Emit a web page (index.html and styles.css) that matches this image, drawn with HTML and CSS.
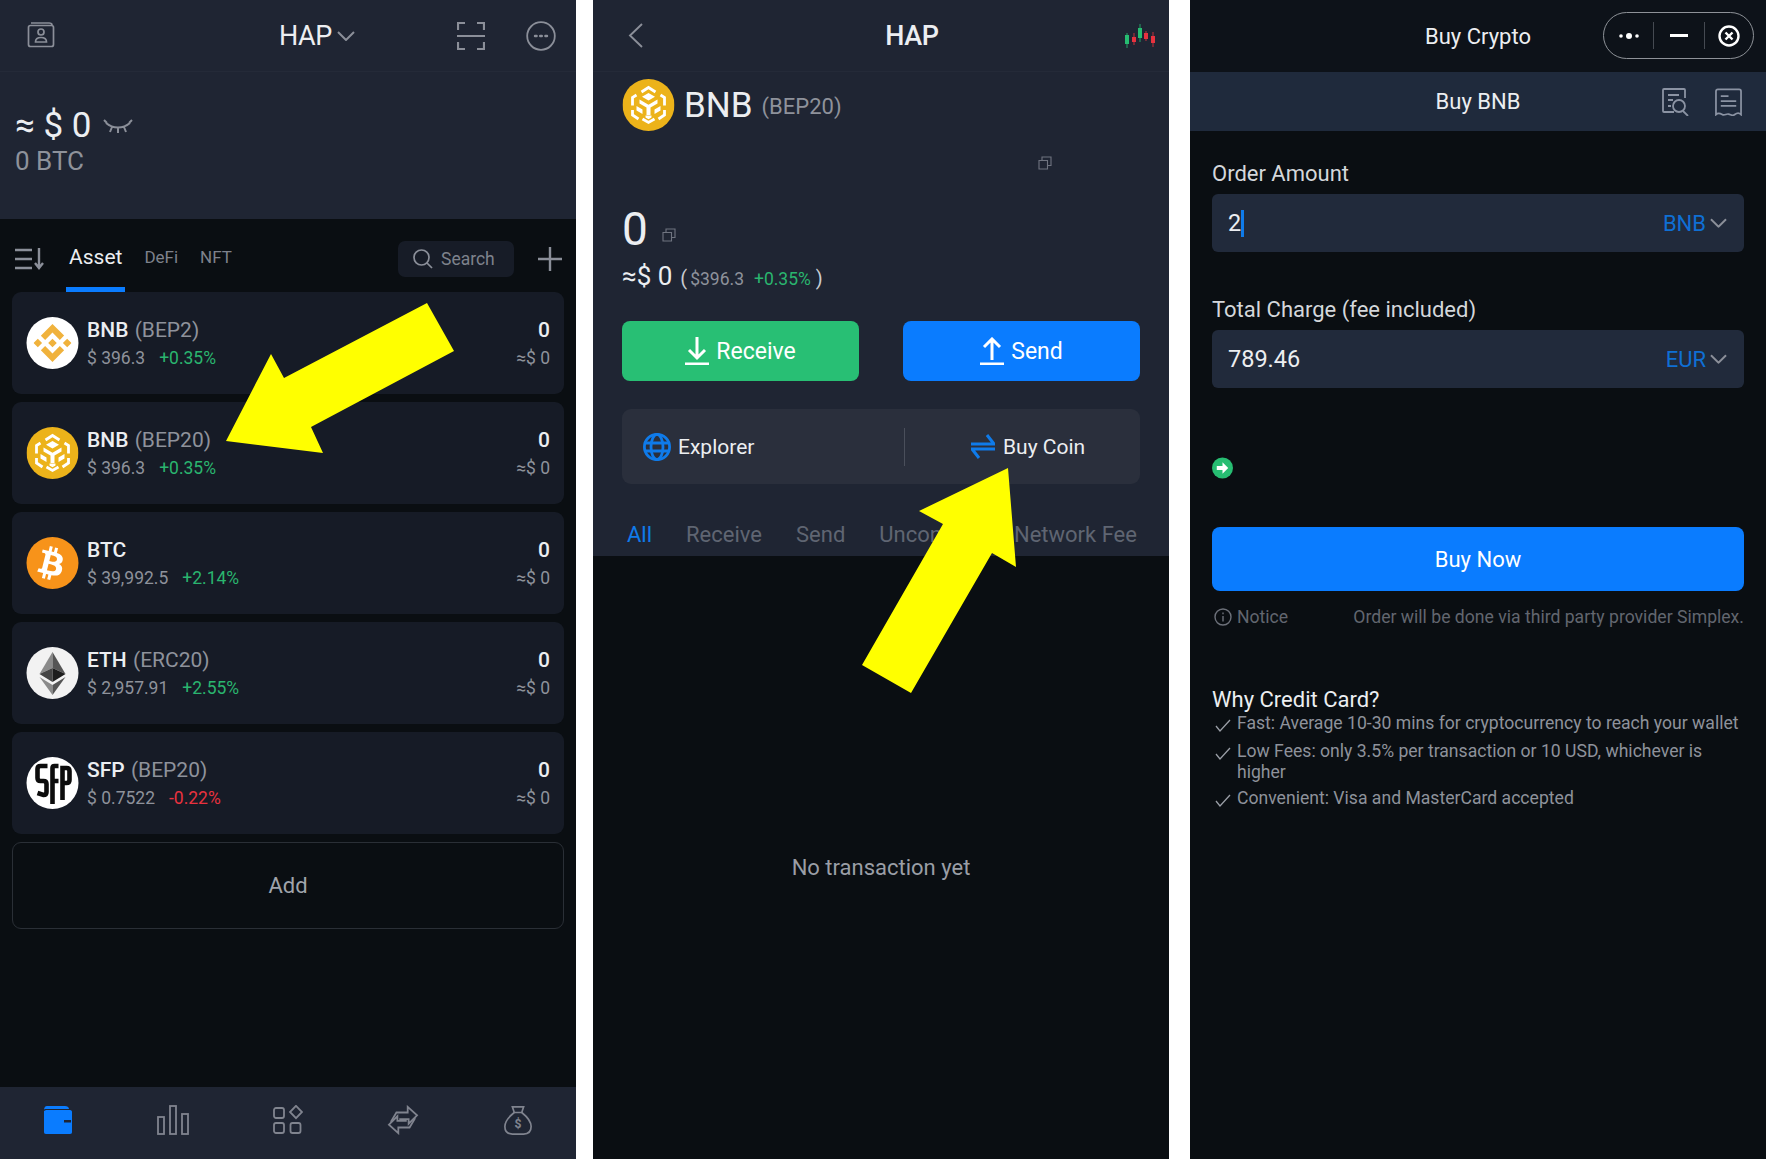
FILE: index.html
```html
<!DOCTYPE html>
<html lang="en">
<head>
<meta charset="utf-8">
<title>HAP wallet - Buy BNB</title>
<link rel="stylesheet" href="styles.css">
</head>
<body>
<svg class="defs" aria-hidden="true">
  <defs>
    <symbol id="binance" viewBox="0 0 24 24">
      <path d="M16.624 13.9202l2.7175 2.7154-7.353 7.353-7.353-7.352 2.7175-2.7164 4.6355 4.6595 4.6356-4.6595zm4.6366-4.6366L24 12l-2.7154 2.7164L18.5682 12l2.6924-2.7164zm-9.272.001l2.7163 2.6914-2.7164 2.7174v-.001L9.2721 12l2.7164-2.7154zm-9.2722-.001L5.4088 12l-2.6914 2.6924L0 12l2.7164-2.7164zM11.9885.0115l7.353 7.329-2.7174 2.7154-4.6356-4.6356-4.6355 4.6595-2.7174-2.7154 7.353-7.353z"/>
    </symbol>
    <symbol id="bnbchain" viewBox="0 0 52 52">
      <circle cx="26" cy="26" r="26" fill="#ecb31a"/>
      <g fill="none" stroke="#fff" stroke-width="2.800">
        <path d="M19 13l7-4.500 7 4.500"/>
        <path d="M14 16l-4 2.500v8"/>
        <path d="M38 16l4 2.500v8"/>
        <path d="M10 31v5l6 4"/>
        <path d="M42 31v5l-6 4"/>
        <path d="M20 40l6 3.500 6-3.500"/>
      </g>
      <path fill="#fff" d="M26 14l6.500 3.700-6.500 3.800-6.500-3.800zM17 20.500l9 5.200 9-5.200v4l-7 4V36h-4v-7.500l-7-4zM14 27l6 3.500v4.500l-6-3.500zM38 27l-6 3.500v4.500l6-3.500zM23 38.500l3 1.800 3-1.800v-2h-6z"/>
    </symbol>
    <symbol id="copy" viewBox="0 0 14 14">
      <path fill="none" stroke="#6f7480" stroke-width="1.100" d="M1 4.500h8.500v8.500H1zM4 4.500V1h9v8.500H9.500"/>
    </symbol>
    <symbol id="chev" viewBox="0 0 18 10">
      <path fill="none" stroke="currentColor" stroke-width="2" d="M1 1l8 8 8-8"/>
    </symbol>
  </defs>
</svg>
<main class="page">

  <section class="panel">
    <header class="head head-wallet">
      <svg class="ic-28" viewBox="0 0 28 28" fill="none" stroke="#8b8f99" stroke-width="1.700">
        <path d="M4 3h18c2 0 3 1 3 2M1.500 7.500c0-1 1-2 2-2h21c1 0 2 1 2 2v17c0 1-1 2-2 2h-21c-1 0-2-1-2-2z"/>
        <circle cx="14" cy="12" r="3"/><path d="M8.500 22c0-3 2-4.500 5.500-4.500s5.500 1.500 5.500 4.500z"/>
      </svg>
      <div class="wallet-name"><span>HAP</span><svg class="chev-lg" viewBox="0 0 18 10"><use href="#chev"/></svg></div>
      <svg class="ic-scan" viewBox="0 0 28 28" fill="none" stroke="#8b8f99" stroke-width="2.200">
        <path d="M1 8V1h7M20 1h7v7M1 20v7h7M20 27h7v-7M0 14h28"/>
      </svg>
      <svg class="ic-more" viewBox="0 0 30 30" fill="none" stroke="#8b8f99" stroke-width="1.800">
        <circle cx="15" cy="15" r="13.800"/>
        <path d="M9 15h1.600M14.200 15h1.600M19.400 15H21" stroke-width="2.400" stroke-linecap="round"/>
      </svg>
    </header>
    <div class="balance">
      <div class="balance-main"><span>≈ $ 0</span>
        <svg class="ic-eye" viewBox="0 0 30 16" fill="none" stroke="#8b8f99" stroke-width="2">
          <path d="M1 2l3 3M29 2l-3 3M3 5c7 6 17 6 24 0M9 9L7 14M21 9l2 5M15 10v5"/>
        </svg>
      </div>
      <div class="balance-btc">0 BTC</div>
    </div>
    <div class="tabs">
      <svg class="ic-sort" viewBox="0 0 29 22" fill="none" stroke="#8b8f99" stroke-width="2.400">
        <path d="M0 2h17M0 11h17M0 20h17M24 0v20M20 15l4 5 4-5" />
      </svg>
      <div class="tab tab-on">Asset</div>
      <div class="tab">DeFi</div>
      <div class="tab">NFT</div>
      <div class="search">
        <svg class="ic-search" viewBox="0 0 20 20" fill="none" stroke="#8b8f99" stroke-width="1.700">
          <circle cx="8.500" cy="8.500" r="7.500"/><path d="M14 14l5 5"/>
        </svg>
        <span>Search</span>
      </div>
      <svg class="ic-plus" viewBox="0 0 24 24" stroke="#8b8f99" stroke-width="2.400"><path d="M12 0v24M0 12h24"/></svg>
    </div>
    <div class="list">
      <article class="coin">
        <svg class="coin-logo" viewBox="0 0 52 52">
          <circle cx="26" cy="26" r="26" fill="#fff"/>
          <svg x="7" y="7" width="38" height="38" viewBox="0 0 24 24" fill="#f0b23c"><use href="#binance"/></svg>
        </svg>
        <div class="coin-info">
          <div class="coin-name"><b>BNB</b> (BEP2)</div>
          <div class="coin-price"><span class="price">$ 396.3</span><span class="up">+0.35%</span></div>
        </div>
        <div class="coin-bal"><b>0</b><span>≈$ 0</span></div>
      </article>
      <article class="coin">
        <svg class="coin-logo" viewBox="0 0 52 52"><use href="#bnbchain"/></svg>
        <div class="coin-info">
          <div class="coin-name"><b>BNB</b> (BEP20)</div>
          <div class="coin-price"><span class="price">$ 396.3</span><span class="up">+0.35%</span></div>
        </div>
        <div class="coin-bal"><b>0</b><span>≈$ 0</span></div>
      </article>
      <article class="coin">
        <svg class="coin-logo" viewBox="0 0 52 52">
          <circle cx="26" cy="26" r="26" fill="#f7931a"/>
          <g transform="translate(26 26) scale(2.050) translate(-12 -12)">
            <path fill="#fff" d="M17.004 10.407c.264-1.74-1.06-2.675-2.87-3.3l.587-2.356-1.434-.357-.572 2.294c-.377-.094-.764-.182-1.15-.27l.576-2.31-1.433-.357-.588 2.355c-.312-.071-.618-.141-.915-.215l.002-.007-1.978-.494-.382 1.532s1.064.244 1.042.259c.581.145.686.53.668.835l-.669 2.685c.04.01.092.025.149.048l-.151-.038-.938 3.762c-.071.176-.251.441-.657.34.014.021-1.042-.26-1.042-.26l-.712 1.642 1.867.466c.347.087.688.178 1.023.264l-.594 2.384 1.433.357.588-2.358c.391.106.771.204 1.143.296l-.586 2.347 1.435.357.594-2.38c2.448.463 4.288.276 5.063-1.937.624-1.783-.031-2.811-1.318-3.482.937-.216 1.643-.832 1.832-2.105zm-3.28 4.599c-.444 1.783-3.447.819-4.421.577l.789-3.162c.974.243 4.096.724 3.632 2.585zm.444-4.625c-.405 1.622-2.905.798-3.716.596l.715-2.867c.811.202 3.423.58 3.001 2.271z"/>
          </g>
        </svg>
        <div class="coin-info">
          <div class="coin-name"><b>BTC</b></div>
          <div class="coin-price"><span class="price">$ 39,992.5</span><span class="up">+2.14%</span></div>
        </div>
        <div class="coin-bal"><b>0</b><span>≈$ 0</span></div>
      </article>
      <article class="coin">
        <svg class="coin-logo" viewBox="0 0 52 52">
          <circle cx="26" cy="26" r="26" fill="#f2f2f2"/>
          <path fill="#8a8a8a" d="M26 5L13 27l13-6z"/>
          <path fill="#555" d="M26 5l13 22-13-6z"/>
          <path fill="#444" d="M13 27l13-6v14z"/>
          <path fill="#1c1c1c" d="M39 27l-13-6v14z"/>
          <path fill="#8a8a8a" d="M13 30l13 8v10z"/>
          <path fill="#555" d="M39 30l-13 8v10z"/>
        </svg>
        <div class="coin-info">
          <div class="coin-name"><b>ETH</b> (ERC20)</div>
          <div class="coin-price"><span class="price">$ 2,957.91</span><span class="up">+2.55%</span></div>
        </div>
        <div class="coin-bal"><b>0</b><span>≈$ 0</span></div>
      </article>
      <article class="coin">
        <svg class="coin-logo" viewBox="0 0 52 52">
          <circle cx="26" cy="26" r="26" fill="#fff"/>
          <g fill="none" stroke="#0c0c0c" stroke-width="4.600">
            <path d="M21 9H14q-3 0-3 3v9q0 3 3 3h3q3 0 3 3v8q0 3-3 3l-6-2"/>
            <path d="M26 47V11q0-2 2-2h4M26 24h6"/>
            <path d="M36 43V11h4q3 0 3 3v9q0 3-3 3h-4"/>
          </g>
        </svg>
        <div class="coin-info">
          <div class="coin-name"><b>SFP</b> (BEP20)</div>
          <div class="coin-price"><span class="price">$ 0.7522</span><span class="down">-0.22%</span></div>
        </div>
        <div class="coin-bal"><b>0</b><span>≈$ 0</span></div>
      </article>
      <div class="add">Add</div>
    </div>
    <nav class="foot">
      <div class="foot-item">
        <svg class="ic-foot" viewBox="0 0 30 30">
          <path fill="#0a7cff" d="M4 1h18c2 0 4 1 4 3H3c-1.500 0-2 .500-2 1 0-2 1-4 3-4z"/>
          <path fill="#0a7cff" d="M3 5h24c1.500 0 2 1 2 2v20c0 1-.500 2-2 2H3c-1.500 0-2-1-2-2V6z"/>
          <rect x="21" y="15" width="7" height="2.500" fill="#1f2533"/>
        </svg>
      </div>
      <div class="foot-item">
        <svg class="ic-foot ic-foot-w" viewBox="0 0 32 30" fill="none" stroke="#80848f" stroke-width="1.800">
          <rect x="1" y="12" width="6" height="17"/><rect x="13" y="1" width="6" height="28"/><rect x="25" y="9" width="6" height="20"/>
        </svg>
      </div>
      <div class="foot-item">
        <svg class="ic-foot" viewBox="0 0 30 30" fill="none" stroke="#80848f" stroke-width="1.800">
          <rect x="1" y="3" width="10" height="10" rx="2"/><path d="M23 0.800l6 6.200-6 6.200-6-6.200z"/>
          <rect x="1" y="18" width="10" height="10" rx="2"/><rect x="17.500" y="18" width="10" height="10" rx="2"/>
        </svg>
      </div>
      <div class="foot-item">
        <svg class="ic-foot ic-foot-w" viewBox="0 0 32 32" fill="none" stroke="#80848f" stroke-width="1.900">
          <path d="M3 18L9 8h12V2l10 9-9 9v-5H12"/>
          <path d="M29 14l-6 10H11v6L1 21l9-9v5h10"/>
        </svg>
      </div>
      <div class="foot-item">
        <svg class="ic-foot" viewBox="0 0 30 32" fill="none" stroke="#80848f" stroke-width="1.800">
          <path d="M9 2h12l-2 6h-8z"/><path d="M11 8C6 12 1 17 1 23c0 5 3 8 8 8h12c5 0 8-3 8-8 0-6-5-11-10-15"/>
          <text class="bag-s" x="15" y="25" text-anchor="middle">$</text>
        </svg>
      </div>
    </nav>
  </section>

  <section class="panel panel-mid">
    <header class="head head-detail">
      <svg class="ic-back" viewBox="0 0 15 25" fill="none" stroke="#8b8f99" stroke-width="1.900"><path d="M14 1L2 12.500 14 24"/></svg>
      <div class="detail-title">HAP</div>
      <svg class="ic-candle" viewBox="0 0 31 24">
        <g fill="#27bd72"><rect x="1" y="11" width="4" height="9"/><rect x="2.600" y="9" width=".8" height="15"/><rect x="14" y="4" width="4" height="10"/><rect x="15.600" y="0" width=".8" height="18"/></g>
        <g fill="#e8323f"><rect x="8" y="13" width="4" height="5"/><rect x="9.600" y="9" width=".8" height="12"/><rect x="20" y="9" width="4" height="6"/><rect x="21.600" y="7" width=".8" height="10"/><rect x="27" y="12" width="4" height="7"/><rect x="28.600" y="8" width=".8" height="15"/></g>
      </svg>
    </header>
    <div class="detail">
      <div class="detail-coin">
        <svg class="coin-logo" viewBox="0 0 52 52"><use href="#bnbchain"/></svg>
        <span class="detail-sym">BNB</span><span class="detail-net">(BEP20)</span>
      </div>
      <div class="addr-row"><svg class="ic-copy" viewBox="0 0 14 14"><use href="#copy"/></svg></div>
      <div class="amount-row"><span class="amount">0</span><svg class="ic-copy" viewBox="0 0 14 14"><use href="#copy"/></svg></div>
      <div class="fiat-row"><span class="fiat">≈$ 0</span><span class="paren">(</span><span class="fiat-price">$396.3</span><span class="up fiat-up">+0.35%</span><span class="paren">)</span></div>
      <div class="actions">
        <div class="btn btn-green">
          <svg class="ic-btn" viewBox="0 0 24 28" fill="none" stroke="#fff" stroke-width="3"><path d="M12 0v21M4 13l8 8 8-8M0 27h24"/></svg>Receive
        </div>
        <div class="btn btn-blue">
          <svg class="ic-btn" viewBox="0 0 24 28" fill="none" stroke="#fff" stroke-width="3"><path d="M12 23V3M4 10l8-8 8 8M0 27h24"/></svg>Send
        </div>
      </div>
      <div class="linkbar">
        <div class="link link-l">
          <svg class="ic-globe" viewBox="0 0 28 28" fill="none" stroke="#0f7bea" stroke-width="2.800">
            <circle cx="14" cy="14" r="12.600"/><ellipse cx="14" cy="14" rx="6" ry="12.600"/><path d="M2 10h24M2 18h24"/>
          </svg>
          <span>Explorer</span>
        </div>
        <div class="link link-r">
          <svg class="ic-swap" viewBox="0 0 24 25" fill="none" stroke="#0f7bea" stroke-width="3">
            <path d="M0 10h23L16 1M24 15H1l7 9"/>
          </svg>
          <span>Buy Coin</span>
        </div>
      </div>
      <div class="filters">
        <span class="filter filter-on">All</span><span class="filter">Receive</span><span class="filter">Send</span><span class="filter filter-long">Unconfirmed</span><span class="filter">Network Fee</span>
      </div>
    </div>
    <div class="empty">No transaction yet</div>
  </section>

  <section class="panel panel-buy">
    <header class="head head-buy">
      <span>Buy Crypto</span>
      <div class="capsule">
        <svg class="cap-dots" viewBox="0 0 20 8" fill="#fff"><circle cx="2" cy="4" r="1.800"/><circle cx="10" cy="4" r="3"/><circle cx="18" cy="4" r="1.800"/></svg>
        <i class="cap-sep"></i>
        <svg class="cap-dash" viewBox="0 0 18 3"><rect width="18" height="3" fill="#fff"/></svg>
        <i class="cap-sep"></i>
        <svg class="cap-close" viewBox="0 0 22 22" fill="none" stroke="#fff" stroke-width="2.400"><circle cx="11" cy="11" r="9.500"/><path d="M7.500 7.500l7 7M14.500 7.500l-7 7"/></svg>
      </div>
    </header>
    <div class="subhead">
      <span>Buy BNB</span>
      <div class="subhead-icons">
        <svg class="ic-sub" viewBox="0 0 27 28" fill="none" stroke="#8b93a3" stroke-width="1.800">
          <path d="M12 24H2q-1 0-1-1V2q0-1 1-1h20q1 0 1 1v8M6 7h11M6 12h5M6 18h3"/>
          <circle cx="17" cy="18" r="6"/><path d="M21 23l5 5"/>
        </svg>
        <svg class="ic-sub" viewBox="0 0 28 28" fill="none" stroke="#8b93a3" stroke-width="1.800">
          <path d="M1 27V3q0-2 2-2h22q2 0 2 2v24c-2-2-4-2-6.500 0s-4 0-6.500-.500-4 2-6.500.500S3 25 1 27zM6 8h8M6 13h16M6 18h16"/>
        </svg>
      </div>
    </div>
    <div class="form">
      <label class="field-label">Order Amount</label>
      <div class="field"><span class="field-val">2<i class="caret"></i></span><span class="field-unit">BNB<svg class="chev-sm" viewBox="0 0 18 10"><use href="#chev"/></svg></span></div>
      <label class="field-label field-label-2">Total Charge (fee included)</label>
      <div class="field"><span class="field-val">789.46</span><span class="field-unit">EUR<svg class="chev-sm" viewBox="0 0 18 10"><use href="#chev"/></svg></span></div>
      <svg class="ic-go" viewBox="0 0 22 22"><circle cx="11" cy="11" r="11" fill="#27bd72"/><path fill="#fff" d="M5 9h6V5l6 6-6 6v-4H5z"/></svg>
      <div class="buy-now">Buy Now</div>
      <div class="notice">
        <span class="notice-l"><svg class="ic-info" viewBox="0 0 18 18" fill="none" stroke="#6d717a" stroke-width="1.400"><circle cx="9" cy="9" r="8"/><path d="M9 8v5.500M9 4.500v1.800"/></svg>Notice</span>
        <span>Order will be done via third party provider Simplex.</span>
      </div>
      <h2 class="why">Why Credit Card?</h2>
      <ul class="why-list">
        <li><svg class="ic-check" viewBox="0 0 16 13" fill="none" stroke="#9a9ea6" stroke-width="1.300"><path d="M1 7l4 5L15 1"/></svg><span>Fast: Average 10-30 mins for cryptocurrency to reach your wallet</span></li>
        <li><svg class="ic-check" viewBox="0 0 16 13" fill="none" stroke="#9a9ea6" stroke-width="1.300"><path d="M1 7l4 5L15 1"/></svg><span>Low Fees: only 3.5% per transaction or 10 USD, whichever is higher</span></li>
        <li><svg class="ic-check" viewBox="0 0 16 13" fill="none" stroke="#9a9ea6" stroke-width="1.300"><path d="M1 7l4 5L15 1"/></svg><span>Convenient: Visa and MasterCard accepted</span></li>
      </ul>
    </div>
  </section>

  <svg class="arrows" viewBox="0 0 1766 1159" aria-hidden="true">
    <polygon fill="#ffff00" points="427,303 454,351 311,427 323,453 226,441 271,354 284,378"/>
    <polygon fill="#ffff00" points="1008,468 1016,567 992,553 911,693 862,665 943,524 919,511"/>
  </svg>
</main>
</body>
</html>
```

FILE: styles.css
```css
* { box-sizing: border-box; }
html, body { margin: 0; padding: 0; background: #fff; }
body { font-family: Roboto, "Liberation Sans", sans-serif; color: #eceef1; }
svg { display: block; flex: none; }
.defs { position: absolute; width: 0; height: 0; }

.page { position: relative; display: flex; width: 1766px; height: 1159px; overflow: hidden; background: #fff; }
.panel { width: 576px; height: 1159px; background: #0a0e12; display: flex; flex-direction: column; }
.panel-mid { margin-left: 17px; }
.panel-buy { margin-left: 21px; }
.arrows { position: absolute; left: 0; top: 0; width: 1766px; height: 1159px; pointer-events: none; }

/* Headers */
.head { height: 72px; display: flex; align-items: center; background: #1f2533; border-bottom: 1px solid #242a38; flex: none; }
.head-wallet { padding: 0 21px 0 27px; }
.ic-28 { width: 28px; height: 28px; margin-top: -3px; }
.wallet-name { display: flex; align-items: center; margin-left: 224px; font-size: 27px; line-height: 32px; letter-spacing: -0.4px; }
.chev-lg { width: 18px; height: 10px; margin-left: 5px; color: #8b8f99; }
.ic-scan { width: 28px; height: 28px; margin-left: 102px; }
.ic-more { width: 30px; height: 30px; margin-left: 41px; }

.balance { height: 147px; background: #1f2533; padding: 34px 15px 0; }
.balance-main { display: flex; align-items: center; font-size: 35px; line-height: 40px; }
.ic-eye { width: 30px; height: 16px; margin-left: 12px; margin-top: 0; }
.balance-btc { font-size: 26px; line-height: 30px; color: #8e929b; margin-top: 0; }

/* Tabs */
.tabs { height: 73px; display: flex; align-items: flex-start; padding: 22px 14px 0 15px; flex: none; }
.ic-sort { width: 29px; height: 22px; margin-top: 7px; margin-right: 22px; }
.tab { font-size: 17px; line-height: 32px; color: #7e828c; margin-left: 22px; }
.tab-on { position: relative; font-size: 21px; color: #eceef1; margin-left: 3px; }
.tab-on::after { content: ""; position: absolute; left: -3px; right: -3px; top: 46px; height: 5px; background: #0a7cff; }
.search { display: flex; align-items: center; gap: 8px; width: 116px; height: 36px; margin-left: auto; padding-left: 15px; background: #171c27; border-radius: 7px; color: #7e828c; font-size: 17.500px; }
.ic-search { width: 20px; height: 20px; }
.ic-plus { width: 24px; height: 24px; margin-left: 24px; margin-top: 6px; }

/* List */
.list { display: flex; flex-direction: column; gap: 8px; padding: 0 12px; flex: none; }
.coin { height: 102px; display: flex; align-items: flex-start; padding: 25px 14px 0; background: #161b26; border-radius: 9px; }
.coin-logo { width: 53px; height: 52px; }
.coin-info { margin-left: 8px; flex: 1; }
.coin-name { font-size: 21px; line-height: 26px; color: #8e929b; word-spacing: 1px; }
.coin-name b { font-weight: 500; color: #eceef1; }
.coin-price { display: flex; gap: 14px; font-size: 17.500px; line-height: 22px; margin-top: 4px; color: #8e929b; }
.up { color: #2ab56f; }
.down { color: #e8323f; }
.coin-bal { display: flex; flex-direction: column; align-items: flex-end; }
.coin-bal b { font-size: 21px; line-height: 26px; font-weight: 500; }
.coin-bal span { font-size: 17.500px; line-height: 22px; margin-top: 4px; color: #8e929b; }
.add { height: 87px; display: flex; align-items: center; justify-content: center; border: 1px solid #2a2f36; border-radius: 9px; font-size: 22px; color: #a0a4ab; }

/* Footer */
.foot { margin-top: auto; height: 72px; display: flex; align-items: center; background: #1f2533; flex: none; padding-bottom: 6px; }
.foot-item { flex: 1; display: flex; justify-content: center; }
.ic-foot { width: 30px; height: 30px; }
.ic-foot-w { width: 32px; }
.bag-s { font-family: Roboto, sans-serif; font-size: 13px; font-weight: 700; fill: #80848f; stroke: none; }

/* Detail */
.head-detail { justify-content: space-between; padding: 0 14px 0 35px; }
.ic-back { width: 15px; height: 25px; }
.detail-title { font-size: 27px; font-weight: 500; line-height: 32px; margin-left: 57px; letter-spacing: -0.300px; }
.ic-candle { width: 31px; height: 24px; }
.detail { background: #1f2533; height: 484px; padding: 7px 29px 0 29px; flex: none; }
.detail-coin { display: flex; align-items: center; }
.detail-sym { font-size: 35px; line-height: 40px; margin-left: 9px; margin-top: 2px; }
.detail-net { font-size: 22px; color: #8e929b; margin-left: 9px; margin-top: 2px; }
.addr-row { padding-left: 416px; margin-top: 25px; height: 13px; }
.ic-copy { width: 14px; height: 14px; }
.amount-row { display: flex; align-items: flex-end; margin-top: 34px; height: 52px; }
.amount { font-size: 46px; line-height: 52px; }
.amount-row .ic-copy { margin-left: 14px; margin-bottom: 13px; }
.fiat-row { display: flex; align-items: baseline; margin-top: 5px; font-size: 18px; color: #8e929b; line-height: 32px; }
.fiat { font-size: 26px; color: #eceef1; }
.paren { font-size: 20px; color: #c8ccd2; }
.fiat-row .fiat + .paren { margin-left: 8px; }
.fiat-price { margin-left: 3px; font-size: 17.500px; }
.fiat-up { margin: 0 5px 0 10px; font-size: 17.500px; }
.actions { display: flex; justify-content: space-between; margin-top: 26px; }
.btn { width: 237px; height: 60px; display: flex; align-items: center; justify-content: center; gap: 7px; border-radius: 8px; font-size: 23px; color: #fff; }
.btn-green { background: #28bf74; }
.btn-blue { background: #0a7cff; }
.ic-btn { width: 24px; height: 28px; }
.linkbar { display: flex; align-items: center; height: 75px; margin-top: 28px; background: #2a2f3c; border-radius: 9px; }
.link { display: flex; align-items: center; font-size: 21px; height: 38px; }
.link-l { width: 282px; flex: none; padding-left: 21px; gap: 7px; }
.link-r { flex: 1; padding-left: 66px; gap: 8px; border-left: 1px solid #4a4f5b; }
.ic-globe { width: 28px; height: 28px; }
.ic-swap { width: 24px; height: 25px; }
.filters { display: flex; margin-top: 34px; padding-left: 5px; font-size: 22px; line-height: 34px; color: #5f6572; white-space: nowrap; }
.filter { margin-right: 34px; }
.filter-long { margin-right: 9px; }
.filter-on { color: #0f7bea; }
.empty { flex: 1; display: flex; align-items: center; justify-content: center; padding-top: 19px; font-size: 22px; color: #9a9ea6; }

/* Buy */
.head-buy { position: relative; background: #0d1219; border-bottom: 0; justify-content: center; font-size: 22px; }
.capsule { position: absolute; right: 12px; top: 12px; width: 151px; height: 47px; display: flex; align-items: center; border: 1px solid #8e9298; border-radius: 24px; padding-left: 15px; }
.cap-dots { width: 20px; height: 8px; }
.cap-sep { width: 1px; height: 27px; background: #454a52; margin-left: 14px; }
.cap-dash { width: 18px; height: 3px; margin-left: 16px; }
.capsule .cap-dash + .cap-sep { margin-left: 16px; }
.cap-close { width: 22px; height: 22px; margin-left: 13px; }
.subhead { position: relative; height: 59px; display: flex; align-items: center; justify-content: center; background: #1f2a3c; font-size: 22px; flex: none; }
.subhead-icons { position: absolute; right: 24px; top: 16px; display: flex; gap: 26px; }
.ic-sub { width: 27px; height: 28px; }
.form { padding: 28px 22px 0; display: flex; flex-direction: column; }
.field-label { font-size: 22px; line-height: 30px; color: #d4d7db; }
.field-label-2 { margin-top: 43px; }
.field { height: 58px; margin-top: 5px; display: flex; align-items: center; justify-content: space-between; padding: 0 17px 0 16px; background: #212a3b; border-radius: 6px; }
.field-val { display: flex; align-items: center; font-size: 23.500px; color: #eceef1; }
.caret { width: 3px; height: 27px; background: #0f7bea; }
.field-unit { display: flex; align-items: center; font-size: 22px; color: #0f6fd4; }
.chev-sm { width: 17px; height: 10px; margin-left: 4px; color: #8b8f99; }
.ic-go { width: 21px; height: 22px; margin-top: 69px; }
.buy-now { height: 64px; margin-top: 48px; display: flex; align-items: center; justify-content: center; background: #0a7cff; border-radius: 8px; font-size: 22px; color: #fff; }
.notice { display: flex; justify-content: space-between; align-items: center; margin-top: 15px; font-size: 17.600px; line-height: 22px; color: #62666f; }
.notice-l { display: flex; align-items: center; gap: 5px; padding-left: 2px; }
.ic-info { width: 18px; height: 18px; }
.why { margin: 58px 0 0; font-size: 22px; line-height: 27px; font-weight: 400; color: #eceef1; }
.why-list { list-style: none; margin: 0; padding: 0; font-size: 17.600px; line-height: 21px; color: #8e929b; }
.why-list li { display: flex; margin-bottom: 7px; }
.why-list li:nth-child(2) { margin-bottom: 5px; }
.ic-check { width: 16px; height: 13px; margin: 6px 6px 0 3px; }
```
